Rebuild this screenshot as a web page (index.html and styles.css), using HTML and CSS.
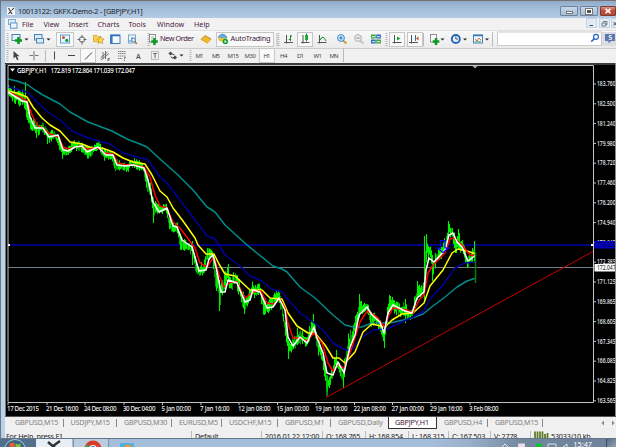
FILE: index.html
```html
<!DOCTYPE html>
<html lang="en">
<head>
  <meta charset="UTF-8">
  <title>10013122: GKFX-Demo-2 - [GBPJPY,H1]</title>
  <link rel="stylesheet" href="styles.css">
</head>
<body>
<div class="screen">
  <div class="window">
    <div class="titlebar">
      <svg class="app-icon" width="8" height="8" viewBox="0 0 8 8"><rect width="8" height="8" fill="#f4f6f8"/><path d="M1.5 1L5 7M4.5 3.5L7 .8M3.5 4.5L1.5 7" stroke="#333" stroke-width="1.1"/></svg>
      <span class="title">10013122: GKFX-Demo-2 - [GBPJPY,H1]</span>
      <div class="win-buttons">
        <span class="wbtn"><i class="w-min"></i></span>
        <span class="wbtn"><i class="w-max"></i></span>
        <span class="wbtn close"><svg width="8" height="6" viewBox="0 0 8 6"><path d="M1.5 .8L6.5 5.2M6.5 .8L1.5 5.2" stroke="#fff" stroke-width="1.7"/></svg></span>
      </div>
    </div>

    <div class="frame">
      <div class="menubar">
        <svg class="menu-icon" width="10" height="10" viewBox="0 0 10 10"><rect x=".5" y=".5" width="7" height="5" fill="#d8eafa" stroke="#7fadd6"/><rect x="2.5" y="4" width="6.5" height="5.2" fill="#eef6fd" stroke="#5f98ca"/></svg>
        <span class="m-file">File</span><span class="m-view">View</span><span class="m-insert">Insert</span><span class="m-charts">Charts</span><span class="m-tools">Tools</span><span class="m-window">Window</span><span>Help</span>
        <div class="mdi">
          <span><svg width="9" height="9" viewBox="0 0 9 9"><path d="M2.5 6.5h3.5" stroke="#456"/></svg></span>
          <span><svg width="9" height="9" viewBox="0 0 9 9"><path d="M3.5 3.5V2.5H7v3H6M2 4h3.7v3H2z" fill="none" stroke="#567" stroke-width=".8"/></svg></span>
          <span><svg width="9" height="9" viewBox="0 0 9 9"><path d="M1.500 3l3 3.500M4.500 3L1.500 6.500" stroke="#456"/></svg></span>
        </div>
      </div>

      <div class="toolbar">
        <svg class="tools" width="611" height="18" viewBox="5 30 611 18">
          <g class="grip"><path d="M7.5 33v13M148.5 33v13M278.5 33v13M386.5 33v13"/></g>
          <!-- new chart / profiles -->
          <rect x="12" y="34.500" width="8" height="6" fill="#e6f3fd" stroke="#4a84b8"/>
          <path d="M18.500 37v7M15 40.500h7" stroke="#0a9a22" stroke-width="2.600"/>
          <path class="drop" d="M24.500 38.500h4l-2 2zM46.500 38.500h4l-2 2zM440.500 38.500h4l-2 2zM463 38.500h4l-2 2zM485 38.500h4l-2 2z"/>
          <g fill="#dcebf8" stroke="#4a84b8"><rect x="34.500" y="34.500" width="7.500" height="5.500"/><rect x="36.500" y="38.500" width="7" height="4.500"/></g>
          <!-- market watch, navigator, terminal, tester -->
          <g class="hot"><rect x="56.500" y="32.500" width="17" height="14"/></g>
          <rect x="60.500" y="35" width="9" height="8" fill="#eaf6ff" stroke="#5b9ed0"/>
          <circle cx="63.500" cy="37.600" r="1.500" fill="#e05020"/><circle cx="66.800" cy="40.400" r="1.600" fill="#159a30"/>
          <g fill="none" stroke="#666"><circle cx="82" cy="39.500" r="2.700"/><path d="M82 35v3M82 41v3.500M77.500 39.500h3M83.500 39.500h3"/></g>
          <path d="M93.500 35.500h3.500l1 1.200h3v5h-7.500z" fill="#f6d45c" stroke="#c7941c" stroke-width=".7"/>
          <path d="M100.500 36.500l1.100 2.300 2.500.3-1.900 1.800.5 2.600-2.200-1.300-2.300 1.300.5-2.600-1.800-1.800 2.500-.3z" fill="#ffdf40" stroke="#b98512" stroke-width=".6"/>
          <rect x="110.500" y="35" width="9.500" height="8.500" fill="#f3faff" stroke="#3f7fbf"/><path d="M111 35.500h9M111.800 36v7" stroke="#2e6fb5" stroke-width="1.500"/>
          <rect x="128.500" y="35" width="7" height="8" fill="#eef6fc" stroke="#7aa7cc"/><path d="M130 40v2M132 37v5M134 38v3" stroke="#4a84b8"/><circle cx="133.500" cy="40" r="2" fill="#cfe8ff" stroke="#3b75ac" stroke-width=".8"/><path d="M135 41.500l2 2.500" stroke="#a66b12" stroke-width="1.200"/>
          <rect x="149.500" y="34.500" width="6" height="7.500" fill="#fff" stroke="#777" stroke-width=".8"/><path d="M151 37h3M151 39h3" stroke="#888" stroke-width=".7"/><path d="M154.500 38v7M151.200 41.500h6.600" stroke="#0a9a22" stroke-width="2.500"/>
          <text x="160" y="41" textLength="34">New Order</text>
          <path d="M201 39.500l4-4 6 3.500-3.500 4.500z" fill="#f0b92c" stroke="#a8700c" stroke-width=".7"/><path d="M201 40l6.500 3.800 3-4" fill="none" stroke="#fff0a0" stroke-width=".7"/>
          <g class="hot"><rect x="216.500" y="32.500" width="57" height="14"/></g>
          <path d="M218 37q4.500-6 9 0l-2 3h-5z" fill="#62acdc" stroke="#3c7eaf" stroke-width=".6"/><path d="M218 37.500l9 1-3 3.500-5-1z" fill="#e8c23a"/><circle cx="225.300" cy="41.500" r="2.700" fill="#12a032"/><path d="M224.500 40l2.300 1.500-2.300 1.500z" fill="#fff"/>
          <text x="230.500" y="41" textLength="40">AutoTrading</text>
          <!-- chart type -->
          <g class="hot"><rect x="297.500" y="32.500" width="15" height="14"/><rect x="389.500" y="32.500" width="15" height="14"/><rect x="407.500" y="32.500" width="15" height="14"/></g>
          <g class="axes"><path d="M286.500 35v8.500M284 42.500h9M303 35v8.500M301 42.500h8.500M319.500 35v8.500M317.500 42.500h9M394.500 35v8.500M392.500 42.500h9M411.500 35v8.500M409 42.500h9"/></g>
          <path d="M290.500 35v6M288.800 39.500h1.700M290.500 36h1.500" stroke="#168a28"/><path d="M306.500 33.500v8" stroke="#168a28"/><rect x="305.200" y="35" width="2.800" height="5" fill="#12a82c"/>
          <path d="M320 40q3-6 6 1" fill="none" stroke="#168a28"/><path d="M397 36.500l3.500 2-3.500 2z" fill="#12a82c"/><path d="M415.500 35v6" stroke="#3370a8"/><path d="M418.500 36.500l-2.500 2 2.500 2z" fill="#d84a16"/>
          <g><path d="M343 40.500l3.500 3" stroke="#d3a11e" stroke-width="2"/><circle cx="341" cy="38" r="3.400" fill="#d9efff" stroke="#3083c8"/><path d="M339.300 38h3.400M341 36.300v3.400" stroke="#1669b8"/></g>
          <g><path d="M360 40.500l3.500 3" stroke="#c3c3c3" stroke-width="2"/><circle cx="358" cy="38" r="3.400" fill="#eee" stroke="#aaa"/><path d="M356.300 38h3.400" stroke="#888"/></g>
          <path d="M371 34.500h4.700v4H371zM376.200 39.500h4.700v4h-4.700z" fill="#38aa38"/><path d="M376.200 34.500h4.700v4h-4.700zM371 39.500h4.700v4H371z" fill="#2c69bd"/><path d="M372 36.700h3M377 36.700h3M372 41.700h3M377 41.700h3" stroke="#eaf6ff"/>
          <path class="sep" d="M277 33v13M423.500 33v13M492.500 32v14.500"/>
          <rect x="430.500" y="34.500" width="6" height="7.500" fill="#fff" stroke="#777" stroke-width=".8"/><path d="M436 38v7M432.700 41.500h6.600" stroke="#0a9a22" stroke-width="2.500"/>
          <circle cx="455.800" cy="39" r="4" fill="#e7f5ff" stroke="#2466b8" stroke-width="1.900"/><path d="M455.800 36.500V39h2.200" fill="none" stroke="#333" stroke-width=".8"/>
          <rect x="473.500" y="35" width="9" height="8" fill="#eef8ff" stroke="#4a84b8"/><path d="M473 35.500h10" stroke="#3878b8" stroke-width="1.500"/><path d="M475 39l2 2 2-3 2 2" stroke="#d64a20" fill="none" stroke-width=".8"/><path d="M475 42l2-1 2 1 2-1" stroke="#148a28" fill="none" stroke-width=".7"/>
          <rect x="497.500" y="32" width="104" height="13.500" fill="#fff" stroke="#ccc"/><circle cx="596" cy="36.800" r="2.500" fill="#eef6ff" stroke="#2e66c2" stroke-width="1.200"/><path d="M594.300 38.600l-3 3" stroke="#2e66c2" stroke-width="1.500"/>
          <rect x="602" y="32" width="14" height="14" fill="#dadde2"/><path d="M605 34h10v7h-4l-2.500 2.500V41H605z" fill="#5c78ac"/><text class="badge" x="608.500" y="40">5</text>
        </svg>
      </div>

      <div class="toolbar second">
        <svg class="tools" width="611" height="15" viewBox="5 48 611 15">
          <g class="grip"><path d="M7.5 50v12M190.500 50v12"/></g>
          <path d="M13.500 51v7.500l2-1.800 1.500 3.500 1.500-.7-1.500-3.300h2.500z" fill="#444"/>
          <path d="M34 51v9.500M29.500 55.500h3.500M35 55.500h3.500" stroke="#777"/><path class="sep" d="M45.500 50v12M343.500 48v14"/>
          <path d="M54.500 51.500v8M68 55.500h7" stroke="#444"/>
          <g class="hot"><rect x="80.500" y="48.500" width="15" height="14"/><rect x="259.500" y="48.500" width="15" height="14"/></g>
          <path d="M85 59.500l7-7" stroke="#444"/>
          <path d="M100.500 58l7-6M101 60l8-6.500M103 52v7M105.500 51v8M108 58.500v2.500M108 58.500h2M108 60h1.500" stroke="#555" stroke-width=".8"/>
          <path d="M118 51.500h8M118 53.500h8M118 56h8M118 58.500h4.500M124.500 57.500V61M124.500 57.500h2" stroke="#666" stroke-width=".8" stroke-dasharray="1.500 .5"/>
          <text class="letter" x="136" y="58.500">A</text>
          <rect x="151.500" y="51.500" width="7" height="8" fill="none" stroke="#888" stroke-dasharray="1 1"/><text class="letter" x="153" y="58">T</text>
          <path d="M168.500 53.500l2-2 2 2-2 2zM173 57.500l2-2 2 2-2 2z" fill="#444"/><path d="M171 56.500l1 1.500 2.500 0M172 54l2.500 1" stroke="#444" fill="none"/><path class="drop" d="M179.500 54.500h4l-2 2z"/>
          <g class="period"><text x="195.500" y="58" textLength="8">M1</text><text x="212" y="58" textLength="8">M5</text><text x="227.500" y="58" textLength="11.500">M15</text><text x="244.500" y="58" textLength="11.500">M30</text><text x="263.500" y="58" textLength="7">H1</text><text x="280" y="58" textLength="7.500">H4</text><text x="297" y="58" textLength="7">D1</text><text x="313.500" y="58" textLength="8.500">W1</text><text x="329.500" y="58" textLength="9">MN</text></g>
        </svg>
      </div>

      <svg class="chart" id="chart" width="611" height="353" viewBox="5 63 611 353">
        <rect x="5" y="63" width="611" height="353"/>
        <path d="M5.500 416V64H616" fill="none" stroke="#777"/>
        <path d="M8 245h585" stroke="#0000a8" stroke-width="1.400"/>
        <path d="M8 267.500h585" stroke="#74808c"/>
        <g id="candles"></g>
        <g class="lines">
          <polyline stroke="#008b8b" points="8,79 17,81 28,85 35,90 43,95 60,104 70,112 88,122 112,131 127,139 140,144 147,147 160,159 178,175 193,190 207,207 215,212 225,225 247,245 273,266 282,269 287,272 300,287 315,298 333,315 345,325 353,327 362,327 372,323 390,323 412,318 423,314 433,306 445,297 457,287 467,281 476,278"/>
          <polyline stroke="#00009c" points="8,87 17,89 27,92 37,102 48,112 60,120 72,131 88,138 110,144 123,153 140,158 147,159 160,177 167,183 180,200 195,220 207,236 215,239 225,255 240,266 250,276 260,280 272,289 282,292 290,302 300,313 313,322 323,330 333,343 345,350 352,350 360,339 373,330 387,329 402,322 413,317 423,312 430,299 443,285 455,268 465,263 476,262"/>
          <polyline stroke="#ffff00" points="8,91 17,93 27,97 33,107 42,118 50,125 60,131 70,142 82,144 92,148 102,148 113,152 123,158 133,162 145,164 152,175 160,191 167,197 173,208 183,221 195,238 198,245 206,254 214,254 219,264 225,274 235,276 250,290 262,290 270,298 282,299 288,313 297,326 308,333 315,333 325,345 333,358 339,358 345,363 355,352 363,332 372,324 385,327 392,320 402,314 413,313 424,303 430,286 443,270 452,253 458,249 467,251 476,254"/>
          <polyline stroke="#ff0000" points="8,92 20,97 27,101 32,115 38,126 43,128 50,134 59,137 63,147 68,149 80,146 87,149 98,148 105,153 113,154 118,163 127,165 133,165 144,167 150,177 155,195 160,206 167,208 173,222 180,228 192,244 195,248 200,263 207,267 213,258 215,260 219,275 224,287 231,282 237,282 245,298 253,292 261,291 267,303 273,304 280,299 285,308 288,323 293,338 300,338 307,341 314,333 322,343 328,363 333,371 338,364 344,368 351,350 360,322 367,311 377,317 385,328 388,317 393,308 407,310 413,313 419,300 424,295 428,273 433,265 445,253 450,239 454,238 462,245 470,255 476,256"/>
          <polyline stroke="#ffffff" points="8,92 22,101 27,102 30,117 35,128 43,128 49,137 58,135 63,150 68,151 75,147 82,146 87,152 98,147 106,155 113,155 117,165 125,166 133,165 144,168 148,180 153,202 159,212 167,208 173,226 177,227 182,240 192,247 195,257 199,271 206,270 209,259 213,255 216,267 221,292 225,292 228,280 237,283 245,302 250,300 253,290 260,292 267,308 273,307 279,298 285,310 288,337 293,346 300,337 307,343 314,327 317,338 323,353 327,373 333,375 338,362 344,373 350,347 355,335 359,315 367,307 372,315 380,322 384,333 388,313 393,305 405,311 412,313 417,298 424,292 426,270 429,258 434,262 445,250 449,235 453,233 457,242 462,247 468,261 476,255"/>
          <path d="M326 397.500L593 251.500" stroke="#c80000" stroke-width="1"/>
        </g>
        <path d="M475.500 252v31" stroke="#008000" stroke-width="1.500"/>
        <path d="M440.500 248v-7.500h4.500v7.500h3.500l-5.500 4.500-5.500-4.500z" fill="none" stroke="#0000ff" stroke-width="1.200"/>
        <path d="M472 65.500h6l-3 3z" fill="#aaa"/>
        <path d="M8 402.500V65.500H593.500V402.500z" fill="none" stroke="#c4c4c4"/>
        <rect x="8" y="244" width="2" height="2" fill="#fff"/><rect x="591" y="244" width="2" height="2" fill="#fff"/>
        <path d="M10 68.500h5l-2.500 3z" fill="#fff"/>
        <text class="head" x="17" y="72.500" textLength="30">GBPJPY,H1</text>
        <text class="head" x="50.500" y="72.500" textLength="84.500">172.819 172.864 171.039 172.047</text>
        <g id="prices"></g>
        <g id="dates"></g>
        <rect x="594.500" y="241" width="21" height="7.500" fill="#0000c8"/><text class="tick dim" x="597" y="247" textLength="18.500" lengthAdjust="spacingAndGlyphs">173.520</text>
        <rect x="594.500" y="264" width="21" height="7.500" fill="#fff"/><text class="tick dark" x="597" y="270.300" textLength="18.500" lengthAdjust="spacingAndGlyphs">172.047</text>
        <path d="M615.500 63v353" stroke="#888"/>
      </svg>

      <div class="tabs">
        <span class="t1">GBPUSD,M15</span><span class="t2">USDJPY,M15</span><span class="t3">GBPUSD,M30</span><span class="t4">EURUSD,M5</span><span class="t5">USDCHF,M15</span><span class="t6">GBPUSD,M1</span><span class="t7">GBPUSD,Daily</span><span class="active">GBPJPY,H1</span><span class="t9">GBPUSD,H4</span><span class="t10">GBPUSD,M15</span>
        <svg class="scroll" width="14" height="6" viewBox="0 0 14 6"><path d="M3 .5v5L.5 3zM11 .5v5L13.500 3z" fill="#888"/></svg>
      </div>

      <div class="status">
        <span class="s-help">For Help, press F1</span><span class="s-def">Default</span><span class="s-time">2016.01.22 12:00</span><span class="s-o">O: 168.765</span><span class="s-h">H: 168.854</span><span class="s-l">L: 168.315</span><span class="s-c">C: 167.503</span><span class="s-v">V: 2778</span><span class="s-net"><svg width="15" height="8" viewBox="0 0 15 8"><path d="M1 .5v7M3.500 .5v7M6 .5v7M8.500 .5v7M11 3v4.500M13.500 2v5.500" stroke="#56751c" stroke-width="1.700"/></svg>53033/10 kb</span>
      </div>
    </div>
  </div>

  <div class="taskbar">
    <div class="start"><svg width="22" height="9" viewBox="0 0 22 9"><circle cx="11" cy="11" r="10.500" fill="#3a6684" stroke="#b5cbd8"/><path d="M5.500 5q3-2.500 5-.5V9h-5z" fill="#e8602c"/><path d="M11.500 4.500q3 2 5 0V9h-5z" fill="#8ac23c"/></svg></div>
    <div class="task mt"><svg width="18" height="9" viewBox="0 0 18 9"><path d="M3 3l7 6M8 7l7-5" stroke="#333" stroke-width="2.500"/></svg></div>
    <div class="task chrome"><svg width="20" height="9" viewBox="0 0 20 9"><circle cx="10" cy="10" r="8.500" fill="#db3a2a"/><path d="M1.500 9L4 5l4 4z" fill="#36a350"/><circle cx="10" cy="10" r="4" fill="#fff"/><circle cx="10" cy="10" r="3" fill="#3b7fe0"/></svg></div>
    <div class="paint"><svg width="16" height="8" viewBox="0 0 16 8"><rect x="1" y="1" width="14" height="9" rx="1" fill="#52b0e0"/><circle cx="9" cy="6" r="3.500" fill="#f0902c"/><circle cx="9" cy="6" r="1.500" fill="#fff"/></svg></div>
    <div class="tray"><svg width="70" height="6" viewBox="0 0 70 6"><path d="M1 5l3-3 3 3" fill="none" stroke="#e4edf4"/><rect x="17" y="1.500" width="7" height="5" fill="#f0d8e8"/><rect x="35" y="1.500" width="6" height="5" fill="#10c030"/><path d="M47 2h8v4h-8zM62 5l4-3v4" fill="none" stroke="#dde5ec"/></svg><span>15:47</span></div>
    <div class="desk"></div>
  </div>
</div>
<script src="chart.js"></script>
</body>
</html>
```
FILE: styles.css
```css
* {
  margin: 0;
  padding: 0;
  box-sizing: border-box;
}

body {
  width: 625px;
  height: 447px;
  overflow: hidden;
  background: #fff;
  font-family: "Noto Sans", "Open Sans", sans-serif;
  font-size: 7px;
  color: #222;
}

svg {
  display: block;
  flex: none;
}

span {
  white-space: nowrap;
}

.screen {
  width: 616px;
  height: 447px;
  overflow: hidden;
}

.window {
  height: 438px;
  border-top: 1px solid #77716f;
  border-left: 1px solid #62798f;
  background: #bcd1e8;
}

.titlebar {
  display: flex;
  height: 17px;
  padding-left: 6px;
  background: linear-gradient(#8fabc8, #9db9d7 30%, #b5cbe4);
}

.app-icon {
  margin-top: 6px;
}

.title {
  margin: 5px 0 0 3px;
  font-size: 7.3px;
  line-height: 10px;
  letter-spacing: -0.21px;
  color: #1a1f28;
}

.win-buttons {
  display: flex;
  gap: 2px;
  margin: 5px 0 0 auto;
}

.wbtn {
  display: flex;
  align-items: center;
  justify-content: center;
  width: 18px;
  height: 10px;
  border: 1px solid #6e839b;
  border-radius: 1px;
  background: linear-gradient(#c8d9ea, #a5bcd5);
}

.wbtn.close {
  width: 16px;
  background: linear-gradient(#dd9382, #c24630 50%, #b94a33);
  border-color: #793c35;
}

.w-min {
  width: 7px;
  height: 3px;
  margin-top: 3px;
  background: #fff;
  border: 1px solid #777;
}

.w-max {
  width: 6px;
  height: 5px;
  background: #555;
  border: 1.5px solid #fff;
  outline: 1px solid #777;
}

.frame {
  display: flex;
  flex-direction: column;
  height: 420px;
  margin-left: 4px;
  background: #f0f0f0;
}

.menubar {
  display: flex;
  flex: none;
  height: 12px;
  padding-left: 3px;
  background: #f2f2f2;
  font-size: 7.2px;
  line-height: 12px;
  color: #4a1c40;
}

.menu-icon { margin-top: 1px; }
.m-file { width: 21.5px; }
.menu-icon + .m-file { margin-left: 4px; }
.m-view { width: 25px; }
.m-insert { width: 29px; }
.m-charts { width: 31px; }
.m-tools { width: 28.5px; }
.m-window { width: 37px; }

.mdi {
  display: flex;
  gap: 2px;
  width: 30px;
  margin-left: auto;
  overflow: hidden;
}

.mdi span {
  flex: none;
  height: 10px;
  background: #e1ebf6;
  border: 1px solid #c5d3e2;
}

.mdi span:last-child {
  margin-left: -1px;
}

.toolbar {
  flex: none;
  height: 18px;
  border-top: 1px solid #e0e0e0;
  background: linear-gradient(#f8f8f8, #ebebeb);
}

.toolbar.second {
  height: 15px;
  border-top: 1px solid #ccc;
  background: #f0f0f0;
}

.toolbar .tools {
  margin-top: -1px;
}

.tools text {
  font-size: 7.3px;
  fill: #41183c;
}

.tools .period text {
  font-size: 6px;
  fill: #444;
}

.tools .letter {
  font-size: 7px;
  font-weight: 600;
  fill: #555;
}

.tools .badge {
  font-size: 6.5px;
  font-weight: 600;
  fill: #fff;
}

.grip path {
  stroke: #b4b4b4;
  stroke-width: 2;
  stroke-dasharray: 1 1;
}

.hot rect {
  fill: #f9f9f9;
  stroke: #c6c6c6;
}

.axes path {
  stroke: #555;
}

.drop {
  fill: #222;
}

.sep {
  stroke: #bbb;
}

.head {
  fill: #fff;
  font-size: 6.2px;
  font-weight: 500;
}

.tick {
  fill: #f0f0f0;
  font-size: 6.2px;
  font-weight: 500;
}

.tick.dark { fill: #333; }
.tick.dim { fill: #000050; }

.lines {
  fill: none;
  stroke-width: 1.5;
  stroke-linejoin: round;
}

.tabs {
  display: flex;
  flex: none;
  height: 15px;
  padding-left: 3px;
  border-top: 1px solid #555;
  font-size: 7.2px;
  line-height: 11px;
  letter-spacing: -0.18px;
  color: #808080;
}

.tabs span {
  position: relative;
  padding-left: 7px;
}

.tabs span::after {
  content: "";
  position: absolute;
  right: 0;
  top: 2px;
  height: 8px;
  border-right: 1px solid #888;
}

.t1 { width: 55.5px; }
.t2 { width: 53.5px; }
.t3 { width: 55px; }
.t4 { width: 50px; }
.t5 { width: 56px; }
.t6 { width: 53px; }
.t7 { width: 57px; }
.t9 { width: 51px; }
.t10 { width: 55px; }

.tabs .t7::after,
.tabs .active::after {
  display: none;
}

.tabs .active {
  width: 49px;
  height: 12px;
  padding-left: 6px;
  border: 1px solid #333;
  border-top: 0;
  background: #fff;
  color: #431238;
}

.scroll {
  margin: 3px 1px 0 auto;
}

.status {
  display: flex;
  height: 8px;
  overflow: hidden;
  font-size: 7.2px;
  line-height: 10px;
  letter-spacing: -0.18px;
  color: #222;
}

.status span {
  height: 8px;
  padding-left: 3px;
  border-right: 1px solid #bbb;
}

.status .s-help { width: 187px; padding-left: 1px; }
.s-def { width: 70px; }
.s-time { width: 61px; }
.s-o { width: 43px; }
.s-h { width: 43px; }
.s-l { width: 40px; }
.s-c { width: 42px; }
.s-v { width: 40px; }

.status .s-net {
  display: flex;
  gap: 2px;
  border: 0;
}

.taskbar {
  display: flex;
  height: 9px;
  border-top: 1px solid #63758a;
  background: linear-gradient(90deg, #a4bddb 70%, #9ab1cb 76%, #71879e 85%, #6e8399);
}

.start {
  width: 36px;
  padding-left: 4px;
  background: #52708e;
}

.task {
  width: 36px;
  margin-right: 1px;
  padding-left: 9px;
  background: #e8eef5;
}

.task.chrome {
  background: #bcccdf;
  border-left: 1px solid #7d92ab;
  border-right: 1px solid #7d92ab;
}

.paint {
  margin-left: 9px;
  padding-top: 3px;
}

.tray {
  display: flex;
  gap: 2px;
  margin-left: auto;
  color: #fff;
  font-size: 7.3px;
  line-height: 10px;
}

.tray svg {
  margin-top: 3px;
}

.desk {
  width: 10px;
  margin-left: 14px;
  border-left: 1px solid #3d4d5e;
  background: linear-gradient(135deg, #5a6c80, #8fa3b6);
}
```
FILE: chart.js
```js
const NS = 'http://www.w3.org/2000/svg';

function add(parent, tag, attrs, text) {
  const el = document.createElementNS(NS, tag);
  for (const k in attrs) el.setAttribute(k, attrs[k]);
  if (text) el.textContent = text;
  document.getElementById(parent).appendChild(el);
}

// x, high, low
const range = [
  [8,87,97],[14,88,102],[20,90,106],[24,92,104],[28,100,125],[30,112,134],[35,122,130],[37,124,136],[42,124,130],
  [48,129,143],[55,133,138],[60,140,150],[63,147,158],[67,148,155],[74,142,149],[80,143,149],[87,148,158],
  [93,146,153],[99,142,149],[104,150,160],[112,152,158],[116,160,172],[122,163,168],[128,165,171],[131,159,166],
  [138,161,168],[144,165,172],[146,172,188],[150,182,194],[153,198,219],[157,204,214],[163,206,213],[166,203,208],
  [169,215,230],[173,224,234],[177,222,230],[180,234,248],[185,241,250],[190,243,252],[192,242,255],[195,252,270],
  [198,265,279],[204,263,274],[207,248,262],[212,249,258],[216,264,290],[220,283,305],[224,278,294],[227,267,282],
  [231,274,291],[236,272,284],[240,282,299],[245,298,310],[249,292,303],[252,282,294],[256,284,299],[260,286,294],
  [264,298,316],[268,304,312],[271,298,310],[276,293,300],[279,292,300],[283,305,322],[287,330,347],[289,342,357],
  [293,340,350],[298,331,344],[303,333,342],[307,338,347],[311,322,335],[314,316,330],[317,333,355],[321,347,357],
  [325,362,378],[327,377,394],[331,372,382],[336,354,365],[338,360,370],[343,370,385],[346,347,372],[349,333,350],
  [353,328,342],[357,311,328],[359,297,317],[362,304,315],[367,302,312],[371,313,326],[376,315,322],[382,323,336],
  [384,330,344],[387,310,327],[390,297,308],[395,299,312],[400,303,316],[405,302,319],[409,312,320],[413,306,319],
  [415,296,307],[418,284,297],[423,285,296],[425,245,290],[427,236,258],[430,244,258],[433,256,276],[437,252,262],
  [441,249,258],[446,236,249],[449,224,235],[452,227,236],[456,239,254],[459,232,249],[463,243,256],[468,258,269],
  [472,251,262],[474,242,258]
];

// single long wicks
const wicks = [[25.5,82,110],[14.5,86,103],[36.5,126,138],[62.5,150,159],[99,141,149],[153.5,205,223],
  [192.5,241,265],[219.5,280,311],[228.5,264,280],[244.5,300,314],[278.5,290,298],[288.5,340,359],
  [297.5,328,345],[313.5,314,330],[327,375,396],[336.5,350,365],[343.5,370,388],[359.5,294,315],
  [384.5,330,348],[389.5,295,310],[405.5,299,323],[417.5,281,300],[424.5,236,300],[426.5,234,255],
  [432.5,255,281],[448.5,221,236],[458.5,229,250],[474.5,241,262]];

let seed = 7;
function rnd() {
  seed = (seed * 16807) % 2147483647;
  return seed / 2147483647;
}

let body = '', shade = '';
let i = 0;
for (let x = 8.5; x < 474.5; x += 1) {
  while (i < range.length - 2 && range[i + 1][0] < x) i++;
  const a = range[i], b = range[i + 1];
  const t = (x - a[0]) / (b[0] - a[0]);
  const hi = a[1] + (b[1] - a[1]) * t;
  const lo = a[2] + (b[2] - a[2]) * t;
  const h = lo - hi;
  const seg = 'M' + x + ' ' + (hi + h * 0.5 * rnd() - 2).toFixed(1) + 'V' + (lo - h * 0.5 * rnd() + 2).toFixed(1);
  if (rnd() < 0.25) shade += seg; else body += seg;
}
wicks.forEach(w => { body += 'M' + w[0] + ' ' + w[1] + 'V' + w[2]; });
add('candles', 'path', { d: shade, stroke: '#009a00', 'stroke-width': 1.1 });
add('candles', 'path', { d: body, stroke: '#00f000', 'stroke-width': 1.1 });

const prices = ['183.760', '182.500', '181.240', '179.980', '178.720', '177.460', '176.200', '174.940', '173.645',
  '172.385', '171.125', '169.865', '168.605', '167.345', '166.085', '164.825', '163.565'];
prices.forEach((p, n) => {
  const y = 84 + n * 19.8;
  add('prices', 'path', { d: 'M594 ' + y + 'h2', stroke: '#c4c4c4' });
  add('prices', 'text', { x: 597, y: y + 2.2, textLength: 18.5, lengthAdjust: 'spacingAndGlyphs', class: 'tick' }, p);
});

const dates = [['17 Dec 2015', 7], ['21 Dec 16:00', 46], ['24 Dec 08:00', 84], ['30 Dec 04:00', 123], ['5 Jan 00:00', 161.5],
  ['7 Jan 16:00', 200], ['12 Jan 08:00', 238], ['15 Jan 00:00', 276.5], ['19 Jan 16:00', 315], ['22 Jan 08:00', 353.5],
  ['27 Jan 00:00', 391.5], ['29 Jan 16:00', 430], ['3 Feb 08:00', 469]];
dates.forEach(d => {
  const w = d[0].length > 11 ? 32.5 : d[1] < 10 ? 32 : 29.5;
  add('dates', 'path', { d: 'M' + (d[1] + 1) + ' 403v2', stroke: '#c4c4c4' });
  add('dates', 'text', { x: d[1], y: 410.5, textLength: w, class: 'tick' }, d[0]);
});
```
